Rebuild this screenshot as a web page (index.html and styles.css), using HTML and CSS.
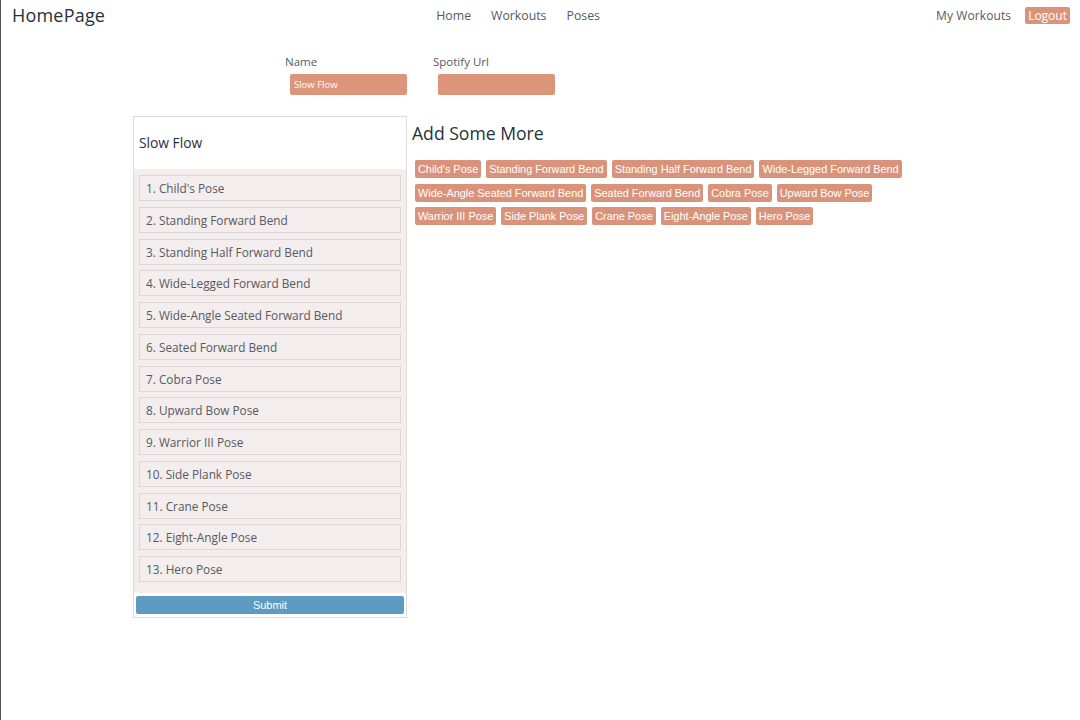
FILE: index.html
```html
<!DOCTYPE html>
<html>
<head>
<meta charset="utf-8">
<link rel="stylesheet" href="styles.css">
</head>
<body>
<header class="topbar">
  <div class="brand">HomePage</div>
  <nav class="nav">
    <a class="nav-link">Home</a>
    <a class="nav-link">Workouts</a>
    <a class="nav-link">Poses</a>
  </nav>
  <div class="account">
    <a class="nav-link">My Workouts</a>
    <button class="logout">Logout</button>
  </div>
</header>

<section class="form-row">
  <div class="field">
    <label class="field-label">Name</label>
    <div class="field-input">Slow Flow</div>
  </div>
  <div class="field">
    <label class="field-label">Spotify Url</label>
    <div class="field-input"></div>
  </div>
</section>

<main class="main">
  <div class="card">
    <div class="card-header">Slow Flow</div>
    <ul class="pose-list">
      <li class="pose-item">1. Child's Pose</li>
      <li class="pose-item">2. Standing Forward Bend</li>
      <li class="pose-item">3. Standing Half Forward Bend</li>
      <li class="pose-item">4. Wide-Legged Forward Bend</li>
      <li class="pose-item">5. Wide-Angle Seated Forward Bend</li>
      <li class="pose-item">6. Seated Forward Bend</li>
      <li class="pose-item">7. Cobra Pose</li>
      <li class="pose-item">8. Upward Bow Pose</li>
      <li class="pose-item">9. Warrior III Pose</li>
      <li class="pose-item">10. Side Plank Pose</li>
      <li class="pose-item">11. Crane Pose</li>
      <li class="pose-item">12. Eight-Angle Pose</li>
      <li class="pose-item">13. Hero Pose</li>
    </ul>
    <div class="card-footer">
      <button class="submit">Submit</button>
    </div>
  </div>

  <div class="more">
    <h2 class="more-title">Add Some More</h2>
    <div class="tags">
      <span class="tag">Child's Pose</span>
      <span class="tag">Standing Forward Bend</span>
      <span class="tag">Standing Half Forward Bend</span>
      <span class="tag">Wide-Legged Forward Bend</span>
      <span class="tag">Wide-Angle Seated Forward Bend</span>
      <span class="tag">Seated Forward Bend</span>
      <span class="tag">Cobra Pose</span>
      <span class="tag">Upward Bow Pose</span>
      <span class="tag">Warrior III Pose</span>
      <span class="tag">Side Plank Pose</span>
      <span class="tag">Crane Pose</span>
      <span class="tag">Eight-Angle Pose</span>
      <span class="tag">Hero Pose</span>
    </div>
  </div>
</main>
</body>
</html>
```

FILE: styles.css
```css
html, body {
  margin: 0;
  padding: 0;
  background: #ffffff;
}
body {
  height: 720px;
  box-sizing: border-box;
  border-left: 1px solid #555555;
  font-family: "Open Sans", "Liberation Sans", sans-serif;
  color: #333a40;
}
.topbar {
  display: flex;
  align-items: center;
  justify-content: space-between;
  height: 30px;
  padding: 0 10px 0 11px;
}
.brand {
  font-size: 18px;
  color: #26313a;
  letter-spacing: 0.2px;
}
.nav {
  display: flex;
  gap: 20px;
  margin-left: 4px;
  margin-right: 9px;
}
.nav-link {
  font-size: 12.3px;
  color: #555a60;
}
.account {
  display: flex;
  align-items: center;
  gap: 14px;
}
.account .nav-link {
  font-size: 12px;
  letter-spacing: 0.1px;
}
.logout {
  border: 0;
  border-radius: 2px;
  background: #da937b;
  color: #ffffff;
  font-family: "Open Sans", "Liberation Sans", sans-serif;
  font-size: 12px;
  height: 17px;
  padding: 0 3px;
  line-height: 17px;
}
.form-row {
  display: flex;
  gap: 26px;
  padding-left: 284px;
  margin-top: 25px;
}
.field {
  display: flex;
  flex-direction: column;
  width: 122px;
}
.field-label {
  font-size: 11.5px;
  color: #555a60;
  line-height: 14px;
}
.field-input {
  margin: 5px 0 0 5px;
  width: 117px;
  height: 21px;
  box-sizing: border-box;
  background: #dc957b;
  border-radius: 2px;
  color: #ffffff;
  font-size: 9.5px;
  line-height: 21px;
  padding-left: 4px;
}
.main {
  display: flex;
  align-items: flex-start;
  gap: 5px;
  padding-left: 132px;
  margin-top: 21px;
}
.card {
  width: 274px;
  box-sizing: border-box;
  border: 1px solid #dcdcdc;
  background: #ffffff;
}
.card-header {
  height: 52px;
  line-height: 52px;
  padding-left: 5px;
  font-size: 13.8px;
  color: #26313a;
}
.pose-list {
  list-style: none;
  margin: 0;
  padding: 6px 5px 11px 5px;
  background: #f3eded;
}
.pose-item {
  height: 26px;
  box-sizing: border-box;
  border: 1px solid #dcd6d6;
  background: #f3eded;
  padding-left: 6px;
  line-height: 24px;
  font-size: 11.8px;
  color: #555a60;
  margin-bottom: 5.75px;
}
.pose-item:last-child {
  margin-bottom: 0;
}
.card-footer {
  padding: 3px 2px;
}
.submit {
  display: block;
  width: 100%;
  height: 18px;
  border: 0;
  border-radius: 2px;
  background: #5d9bc2;
  color: #ffffff;
  font-family: "Liberation Sans", Arial, sans-serif;
  font-size: 11px;
  padding: 0;
}
.more {
  width: 520px;
}
.more-title {
  margin: 6px 0 16px 0;
  font-weight: normal;
  font-size: 17.6px;
  line-height: 22px;
  color: #26313a;
}
.tags {
  display: flex;
  flex-wrap: wrap;
  gap: 5.5px 5px;
  padding-left: 3px;
}
.tag {
  display: inline-block;
  height: 18px;
  line-height: 18px;
  padding: 0 3px;
  border-radius: 2px;
  background: #da937b;
  color: #ffffff;
  font-family: "Liberation Sans", Arial, sans-serif;
  font-size: 10.9px;
}
```
